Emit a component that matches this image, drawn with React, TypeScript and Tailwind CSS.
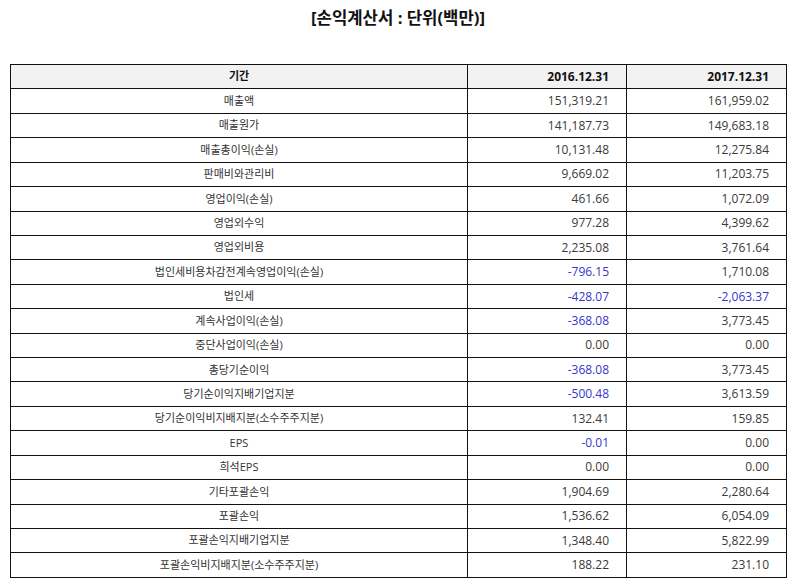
const rows: [string, string, string][] = [
  ["매출액", "151,319.21", "161,959.02"],
  ["매출원가", "141,187.73", "149,683.18"],
  ["매출총이익(손실)", "10,131.48", "12,275.84"],
  ["판매비와관리비", "9,669.02", "11,203.75"],
  ["영업이익(손실)", "461.66", "1,072.09"],
  ["영업외수익", "977.28", "4,399.62"],
  ["영업외비용", "2,235.08", "3,761.64"],
  ["법인세비용차감전계속영업이익(손실)", "-796.15", "1,710.08"],
  ["법인세", "-428.07", "-2,063.37"],
  ["계속사업이익(손실)", "-368.08", "3,773.45"],
  ["중단사업이익(손실)", "0.00", "0.00"],
  ["총당기순이익", "-368.08", "3,773.45"],
  ["당기순이익지배기업지분", "-500.48", "3,613.59"],
  ["당기순이익비지배지분(소수주주지분)", "132.41", "159.85"],
  ["EPS", "-0.01", "0.00"],
  ["희석EPS", "0.00", "0.00"],
  ["기타포괄손익", "1,904.69", "2,280.64"],
  ["포괄손익", "1,536.62", "6,054.09"],
  ["포괄손익지배기업지분", "1,348.40", "5,822.99"],
  ["포괄손익비지배지분(소수주주지분)", "188.22", "231.10"],
];

const font = { fontFamily: '"Open Sans", "Noto Sans CJK KR", sans-serif' };

function Num({ v }: { v: string }) {
  return (
    <td
      className={
        "h-[24.43px] border border-[#111] pr-[17px] text-right text-[12px] " +
        (v.startsWith("-") ? "text-[#3535cc]" : "text-[#3a3a3a]")
      }
    >
      {v}
    </td>
  );
}

export default function App() {
  return (
    <div className="min-h-[586px] bg-white pl-[10px] pr-[8px] pt-[6px]" style={font}>
      <h1 className="text-center text-[16.7px] font-bold leading-[24px] text-[#111]">
        [손익계산서 : 단위(백만)]
      </h1>
      <table className="mt-[34px] w-[776px] table-fixed border-collapse">
        <colgroup>
          <col className="w-[457px]" />
          <col className="w-[159px]" />
          <col className="w-[160px]" />
        </colgroup>
        <thead>
          <tr className="bg-[#f2f2f2] text-[12px] font-bold text-[#111]">
            <th className="h-[24.43px] border border-[#111] text-center text-[11px]">기간</th>
            <th className="h-[24.43px] border border-[#111] pr-[17px] text-right">2016.12.31</th>
            <th className="h-[24.43px] border border-[#111] pr-[17px] text-right">2017.12.31</th>
          </tr>
        </thead>
        <tbody>
          {rows.map(([label, a, b]) => (
            <tr key={label}>
              <td className="h-[24.43px] border border-[#111] text-center text-[11px] text-[#333]">
                {label}
              </td>
              <Num v={a} />
              <Num v={b} />
            </tr>
          ))}
        </tbody>
      </table>
    </div>
  );
}
